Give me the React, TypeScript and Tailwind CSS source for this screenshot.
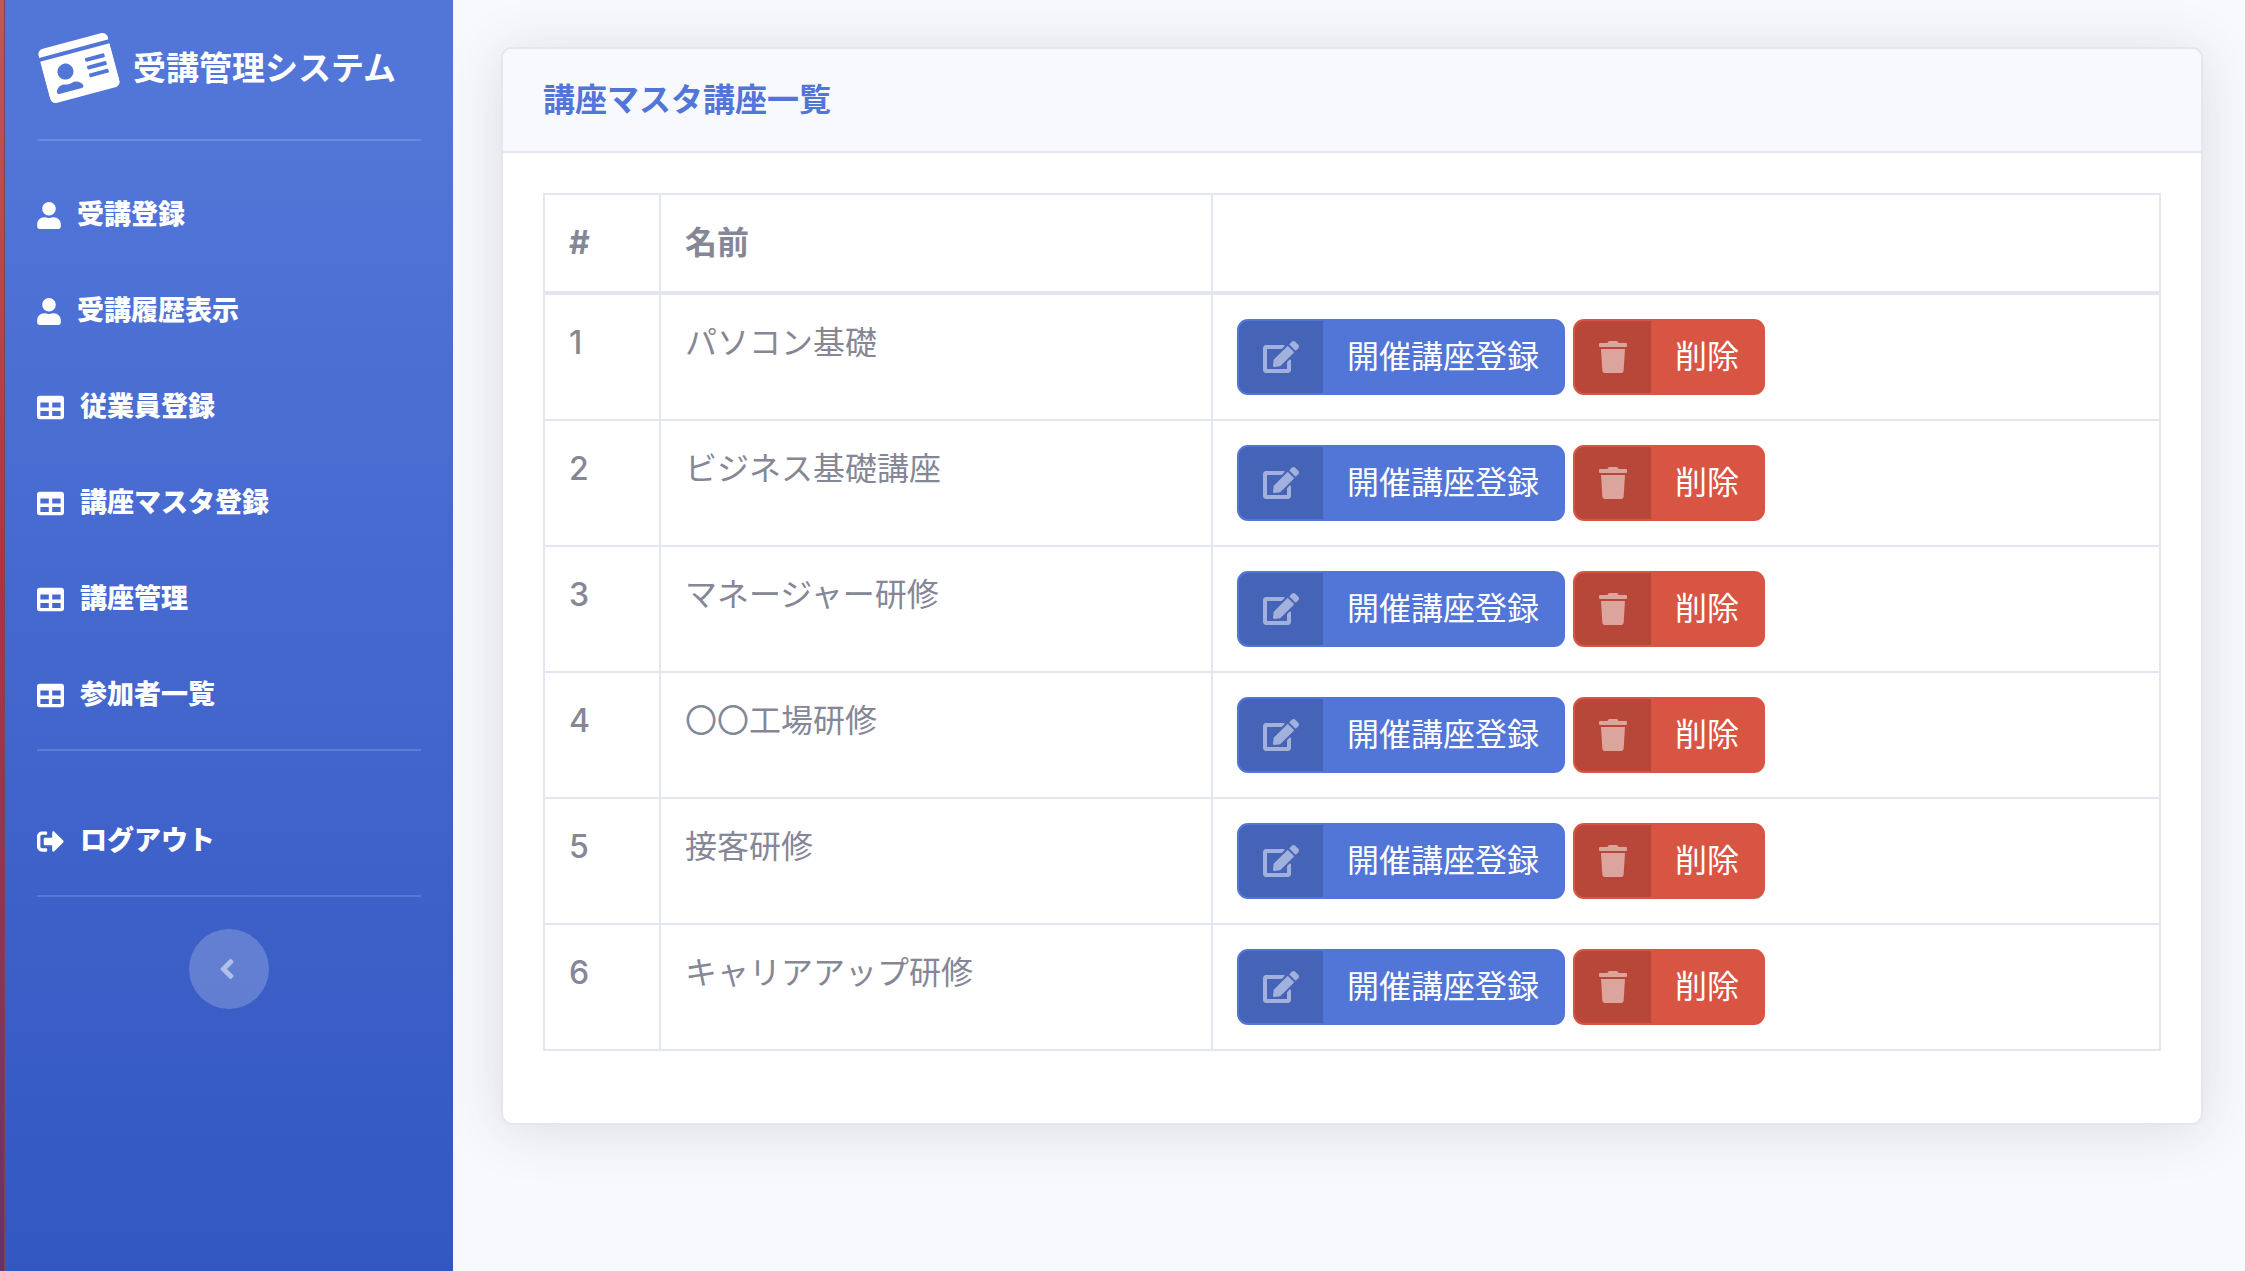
import React from 'react';
import type { IconType } from 'react-icons';
import { FaAngleLeft, FaEdit, FaIdCard, FaSignOutAlt, FaTable, FaTrash, FaUser } from 'react-icons/fa';

type NavEntry = { label: string; icon: IconType; iconClass: string };

const navItems: NavEntry[] = [
  { label: '受講登録', icon: FaUser, iconClass: 'w-6 h-[27px]' },
  { label: '受講履歴表示', icon: FaUser, iconClass: 'w-6 h-[27px]' },
  { label: '従業員登録', icon: FaTable, iconClass: 'size-[27px]' },
  { label: '講座マスタ登録', icon: FaTable, iconClass: 'size-[27px]' },
  { label: '講座管理', icon: FaTable, iconClass: 'size-[27px]' },
  { label: '参加者一覧', icon: FaTable, iconClass: 'size-[27px]' },
];

const courses = [
  { id: 1, name: 'パソコン基礎' },
  { id: 2, name: 'ビジネス基礎講座' },
  { id: 3, name: 'マネージャー研修' },
  { id: 4, name: '〇〇工場研修' },
  { id: 5, name: '接客研修' },
  { id: 6, name: 'キャリアアップ研修' },
];

const NavLink: React.FC<{ item: NavEntry }> = ({ item }) => {
  const Icon = item.icon;
  return (
    <a href="#" className="flex items-center gap-4 h-24 px-8 text-[27px] leading-8 font-extrabold text-white">
      <Icon className={item.iconClass} />
      <span>{item.label}</span>
    </a>
  );
};

const Divider: React.FC = () => <hr className="mx-8 border-0 h-[2px] bg-white/15" />;

const Sidebar: React.FC = () => (
  <aside className="w-[448px] shrink-0 bg-linear-to-b from-[#5275d8] from-10% to-[#3357c1]">
    <a href="#" className="flex items-center gap-[18px] h-[136px] mb-[3px] pl-[38px] text-white">
      <FaIdCard className="w-[72px] h-16 -rotate-15" />
      <span className="text-[33px] leading-[48px] font-bold">受講管理システム</span>
    </a>
    <Divider />
    <nav className="pt-[26px] pb-[6px]">
      {navItems.map((item) => <NavLink key={item.label} item={item} />)}
    </nav>
    <Divider />
    <nav className="pt-[42px] pb-[6px]">
      <NavLink item={{ label: 'ログアウト', icon: FaSignOutAlt, iconClass: 'size-[27px]' }} />
    </nav>
    <Divider />
    <div className="flex justify-center pt-8">
      <button type="button" aria-label="Toggle sidebar" className="flex items-center justify-center size-20 pr-1 rounded-full bg-white/20 text-white/50">
        <FaAngleLeft className="w-4 h-8" />
      </button>
    </div>
  </aside>
);

const SplitButton: React.FC<{ label: string; color: string; children: React.ReactNode }> = ({ label, color, children }) => (
  <button type="button" className={`flex rounded-[11px] border-2 overflow-hidden leading-[48px] text-white ${color}`}>
    <span className="flex items-center px-6 h-[72px] bg-black/15 text-white/50">{children}</span>
    <span className="px-6 py-3">{label}</span>
  </button>
);

export default function App() {
  return (
    <div className="flex min-h-screen bg-[#f8f9fc] text-[32px] leading-[48px] text-[#858796] font-['Inter','Noto_Sans_CJK_JP',sans-serif]">
      <div className="w-[5px] shrink-0 border-r border-[#7c4258] bg-linear-to-b from-[#c4564f] via-[#b72e42] via-45% to-[#67335f]" />
      <Sidebar />
      <main className="flex-1 pt-[47px] pl-12 pr-[42px]">
        <section className="rounded-[11px] border-2 border-[#e3e6f0] bg-white shadow-[0_5px_56px_0_rgba(58,59,69,0.15)]">
          <header className="px-10 py-8 rounded-t-[9px] border-b-2 border-[#e3e6f0] bg-[#f8f9fc]">
            <h1 className="leading-[38px] font-bold text-[#5275d8]">講座マスタ講座一覧</h1>
          </header>
          <div className="p-10">
            <table className="w-full mb-8 table-fixed border-collapse text-left">
              <thead>
                <tr>
                  <th className="w-[116px] p-6 border-2 border-b-4 border-[#e3e6f0]">#</th>
                  <th className="w-[552px] p-6 border-2 border-b-4 border-[#e3e6f0]">名前</th>
                  <th className="p-6 border-2 border-b-4 border-[#e3e6f0]"></th>
                </tr>
              </thead>
              <tbody>
                {courses.map((c) => (
                  <tr key={c.id}>
                    <td className="p-6 align-top font-medium border-2 border-[#e3e6f0]">{c.id}</td>
                    <td className="p-6 align-top border-2 border-[#e3e6f0]">{c.name}</td>
                    <td className="p-6 align-top border-2 border-[#e3e6f0]">
                      <div className="flex gap-2">
                        <SplitButton label="開催講座登録" color="border-[#5275d8] bg-[#5275d8]">
                          <FaEdit className="w-9 h-8" />
                        </SplitButton>
                        <SplitButton label="削除" color="border-[#d85543] bg-[#d85543]">
                          <FaTrash className="w-7 h-8" />
                        </SplitButton>
                      </div>
                    </td>
                  </tr>
                ))}
              </tbody>
            </table>
          </div>
        </section>
      </main>
    </div>
  );
}
